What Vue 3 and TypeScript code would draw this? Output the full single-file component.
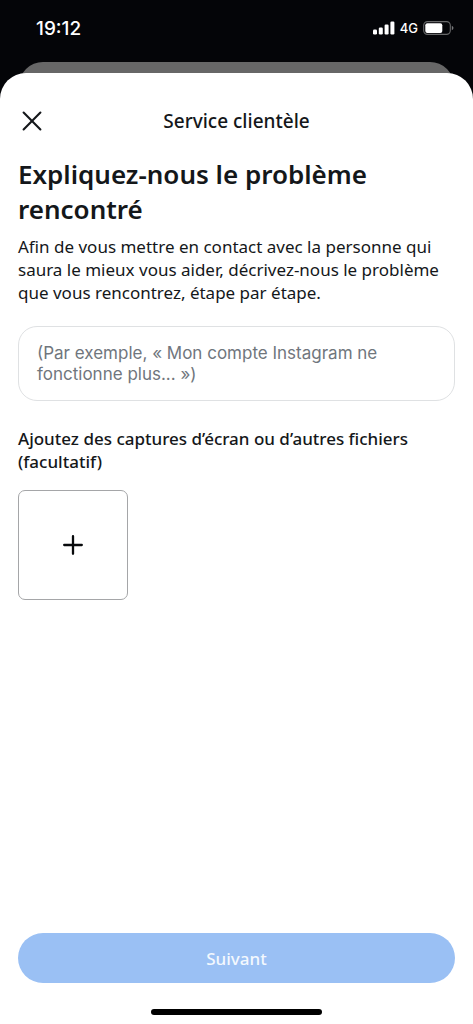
<script setup lang="ts">
import { ref } from 'vue'

const description = ref<string>('')
const signalBars: number[] = [5, 7, 10, 13]
</script>

<template>
  <div class="screen">
    <div class="status">
      <time class="clock">19:12</time>
      <div class="indicators">
        <svg class="signal" width="22" height="14" viewBox="0 0 22 14" aria-hidden="true">
          <rect
            v-for="(h, i) in signalBars"
            :key="i"
            :x="i * 5.8"
            :y="13.5 - h"
            width="4"
            :height="h"
            rx="1.2"
            fill="#fff"
          />
        </svg>
        <span class="network">4G</span>
        <svg width="31" height="14" viewBox="0 0 31 14" aria-hidden="true">
          <rect x="0.7" y="0.6" width="26.6" height="12.8" rx="3.8" fill="none" stroke="#68696a" stroke-width="1.1" />
          <rect x="2.3" y="2.2" width="17" height="9.7" rx="2" fill="#fff" />
          <path d="M28.8 4.8C31 5.6 31 8.4 28.8 9.2Z" fill="#77787a" />
        </svg>
      </div>
    </div>
    <div class="backdrop-card"></div>
    <main class="sheet">
      <header class="bar">
        <button class="close" type="button" aria-label="Fermer">
          <svg width="20" height="20" viewBox="0 0 20 20" aria-hidden="true">
            <path d="M1.6 1.6L18.4 18.4M18.4 1.6L1.6 18.4" stroke="#14171a" stroke-width="2.1" stroke-linecap="round" />
          </svg>
        </button>
        <h1 class="title">Service clientèle</h1>
      </header>
      <h2 class="heading">Expliquez-nous le problème rencontré</h2>
      <p class="intro" id="intro">
        Afin de vous mettre en contact avec la personne qui saura le mieux vous aider, décrivez-nous le problème que
        vous rencontrez, étape par étape.
      </p>
      <textarea
        v-model="description"
        class="field"
        rows="2"
        aria-labelledby="intro"
        placeholder="(Par exemple, « Mon compte Instagram ne fonctionne plus... »)"
      ></textarea>
      <p class="attach-label" id="attach">Ajoutez des captures d’écran ou d’autres fichiers (facultatif)</p>
      <button class="add" type="button" aria-labelledby="attach">
        <svg width="20" height="20" viewBox="0 0 20 20" aria-hidden="true">
          <path d="M10 1.2V18.8M1.2 10H18.8" stroke="#080a0c" stroke-width="2.3" stroke-linecap="round" />
        </svg>
      </button>
      <button class="next" type="button">Suivant</button>
      <div class="home"></div>
    </main>
  </div>
</template>

<style>
body {
  margin: 0;
  background: #040508;
}
</style>

<style scoped>
.screen {
  min-height: 100vh;
  display: flex;
  flex-direction: column;
  background: #040508;
  color: #14171a;
  font-family: 'Noto Sans', 'Open Sans', sans-serif;
}
.status {
  height: 62px;
  box-sizing: border-box;
  padding: 0 19px 6px 36px;
  display: flex;
  align-items: center;
  justify-content: space-between;
  color: #fff;
  font-family: Inter, 'Liberation Sans', sans-serif;
}
.clock {
  font-size: 19px;
  font-weight: 500;
}
.indicators {
  display: flex;
  align-items: center;
  gap: 5px;
}
.network {
  font-size: 13px;
  font-weight: 500;
}
.backdrop-card {
  height: 37px;
  margin: 0 19px -26px;
  border-radius: 24px 24px 0 0;
  background: #676767;
}
.sheet {
  flex: 1;
  display: flex;
  flex-direction: column;
  box-sizing: border-box;
  padding: 24px 18px 9px;
  border-radius: 26px 26px 0 0;
  background: #fff;
}
.bar {
  display: grid;
  grid-template-columns: 28px 1fr 28px;
  align-items: center;
  height: 48px;
}
.close {
  display: grid;
  place-items: center;
  width: 28px;
  height: 28px;
  padding: 0;
  border: 0;
  background: none;
}
.title {
  margin: 0;
  text-align: center;
  font-size: 19px;
  font-weight: 500;
}
.heading {
  margin: 12px 0 0;
  font-size: 26px;
  line-height: 35px;
  font-weight: 600;
}
.intro,
.attach-label {
  margin: 8px 0 0;
  font-size: 17px;
  line-height: 23px;
}
.field {
  display: block;
  box-sizing: border-box;
  width: 100%;
  height: 75px;
  margin: 22px 0 0;
  padding: 16px 18px;
  border: 1px solid #dfe1e3;
  border-radius: 19px;
  background: #fff;
  color: #14171a;
  resize: none;
  overflow: hidden;
  font-family: Inter, 'Liberation Sans', sans-serif;
  font-size: 17px;
  line-height: 21px;
}
.field::placeholder {
  color: #70767d;
  opacity: 1;
}
.attach-label {
  margin-top: 26px;
  font-weight: 500;
}
.add {
  display: grid;
  place-items: center;
  width: 110px;
  height: 110px;
  margin-top: 17px;
  padding: 0;
  border: 1px solid #a5a6a8;
  border-radius: 7px;
  background: #fff;
}
.next {
  height: 50px;
  margin-top: auto;
  padding: 0;
  border: 0;
  border-radius: 25px;
  background: #9ac0f4;
  color: #f3f8fe;
  font-family: inherit;
  font-size: 17px;
  font-weight: 500;
}
.home {
  align-self: center;
  width: 36vw;
  height: 6px;
  margin-top: 26px;
  border-radius: 3px;
  background: #000;
}
</style>
